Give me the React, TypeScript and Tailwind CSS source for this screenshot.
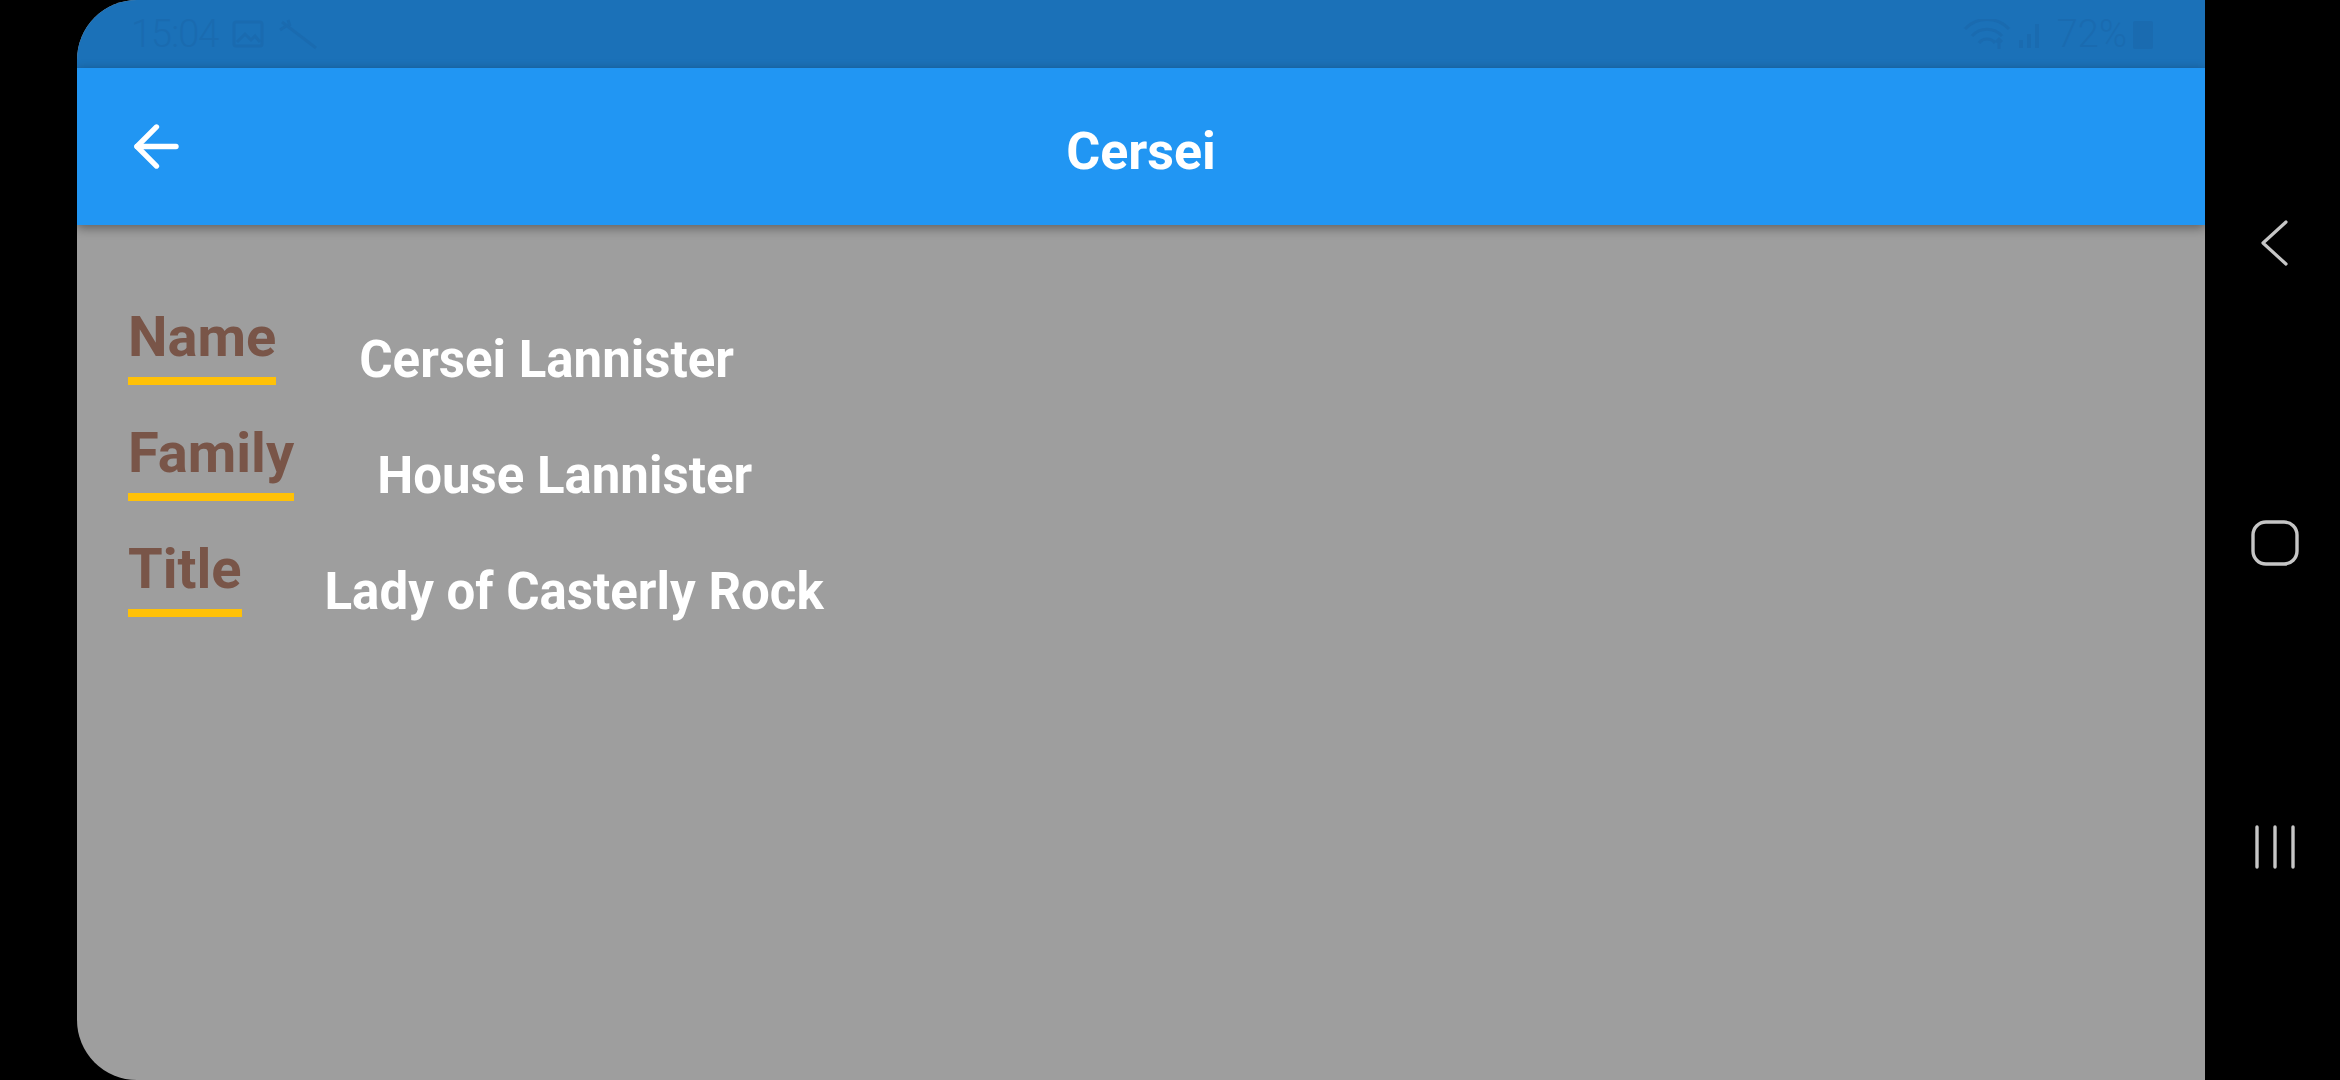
import { ArrowLeft } from 'lucide-react';

const details = [
    { label: 'Name', value: 'Cersei Lannister' },
    { label: 'Family', value: 'House Lannister' },
    { label: 'Title', value: 'Lady of Casterly Rock' },
];

function StatusBar() {
    return (
        <div className="flex h-[68px] shrink-0 items-center justify-between bg-[#1b71b8] pl-[54px] pr-[52px] text-[#1a6bb0]">
            <div className="flex items-center gap-[14px]">
                <span className="text-[38px] font-light leading-none tracking-[-1px]">15:04</span>
                <svg width="32" height="28" viewBox="0 0 32 28" fill="none" stroke="currentColor" strokeWidth="3">
                    <rect x="2" y="2" width="28" height="24" rx="2" />
                    <path d="M5 22l8-8 6 6 4-4 5 6" />
                </svg>
                <svg width="42" height="32" viewBox="0 0 42 32" fill="none" stroke="currentColor" strokeWidth="3">
                    <path d="M4 4l34 26" />
                    <path d="M2 12l6-4M10 2l2 6" />
                </svg>
            </div>
            <div className="flex items-center gap-[6px]">
                <svg width="48" height="30" viewBox="0 0 48 30" fill="none" stroke="currentColor" strokeWidth="3">
                    <path d="M2 10a30 30 0 0 1 44 0" />
                    <path d="M9 17a20 20 0 0 1 30 0" />
                    <path d="M16 24a10 10 0 0 1 16 0" />
                    <path d="M36 30v-10M33 23l3-3 3 3" />
                </svg>
                <svg width="26" height="28" viewBox="0 0 26 28" fill="currentColor">
                    <rect x="2" y="20" width="4" height="8" />
                    <rect x="10" y="14" width="4" height="14" />
                    <rect x="18" y="4" width="4" height="24" />
                </svg>
                <span className="ml-[8px] text-[38px] font-light leading-none">72%</span>
                <svg width="20" height="30" viewBox="0 0 20 30" fill="currentColor">
                    <rect x="0" y="2" width="20" height="28" rx="2" />
                </svg>
            </div>
        </div>
    );
}

function AppBar() {
    return (
        <div className="relative z-10 grid h-[157px] shrink-0 grid-cols-[1fr_auto_1fr] items-center bg-[#2196f3] shadow-[0_3px_10px_rgba(0,0,0,0.4)]">
            <div className="pl-[46px]">
                <ArrowLeft size={67} strokeWidth={1.9} className="text-white" />
            </div>
            <h1 className="mt-[10px] text-[52px] font-bold leading-none text-white">Cersei</h1>
            <div />
        </div>
    );
}

function DetailRow({ label, value }: { label: string; value: string }) {
    return (
        <div className="flex items-end">
            <span className="inline-block border-b-[8px] border-[#ffc107] pb-[7px] text-[56px] font-bold leading-[66px] text-[#795548]">
                {label}
            </span>
            <span className="ml-[83px] translate-y-[4px] text-[51px] font-bold leading-[59px] text-white">
                {value}
            </span>
        </div>
    );
}

function NavBar() {
    return (
        <div className="flex flex-1 flex-col items-center pl-[5px] pt-[219px] text-[#c6c6c6]">
            <svg width="30" height="48" viewBox="0 0 30 48" fill="none" stroke="currentColor" strokeWidth="3.2" strokeLinecap="round" strokeLinejoin="round">
                <path d="M26 3L3 24l23 21" />
            </svg>
            <svg className="mt-[253px]" width="48" height="46" viewBox="0 0 48 46" fill="none" stroke="currentColor" strokeWidth="3.4">
                <rect x="2" y="2" width="44" height="42" rx="13" />
            </svg>
            <svg className="mt-[258px]" width="44" height="46" viewBox="0 0 44 46" fill="none" stroke="currentColor" strokeWidth="3.4" strokeLinecap="round">
                <path d="M4 3v40M22 3v40M40 3v40" />
            </svg>
        </div>
    );
}

export default function App() {
    return (
        <div className="flex h-[1080px] w-[2340px] overflow-hidden bg-black" style={{ fontFamily: 'Roboto, "Liberation Sans", sans-serif' }}>
            <div className="w-[77px] shrink-0" />
            <div className="flex w-[2128px] shrink-0 flex-col overflow-hidden rounded-l-[60px] bg-[#9e9e9e]">
                <StatusBar />
                <AppBar />
                {/* Character details */}
                <div className="flex flex-col gap-[35px] pl-[51px] pt-[79px]">
                    {details.map((d) => (
                        <DetailRow key={d.label} label={d.label} value={d.value} />
                    ))}
                </div>
            </div>
            <NavBar />
        </div>
    );
}
